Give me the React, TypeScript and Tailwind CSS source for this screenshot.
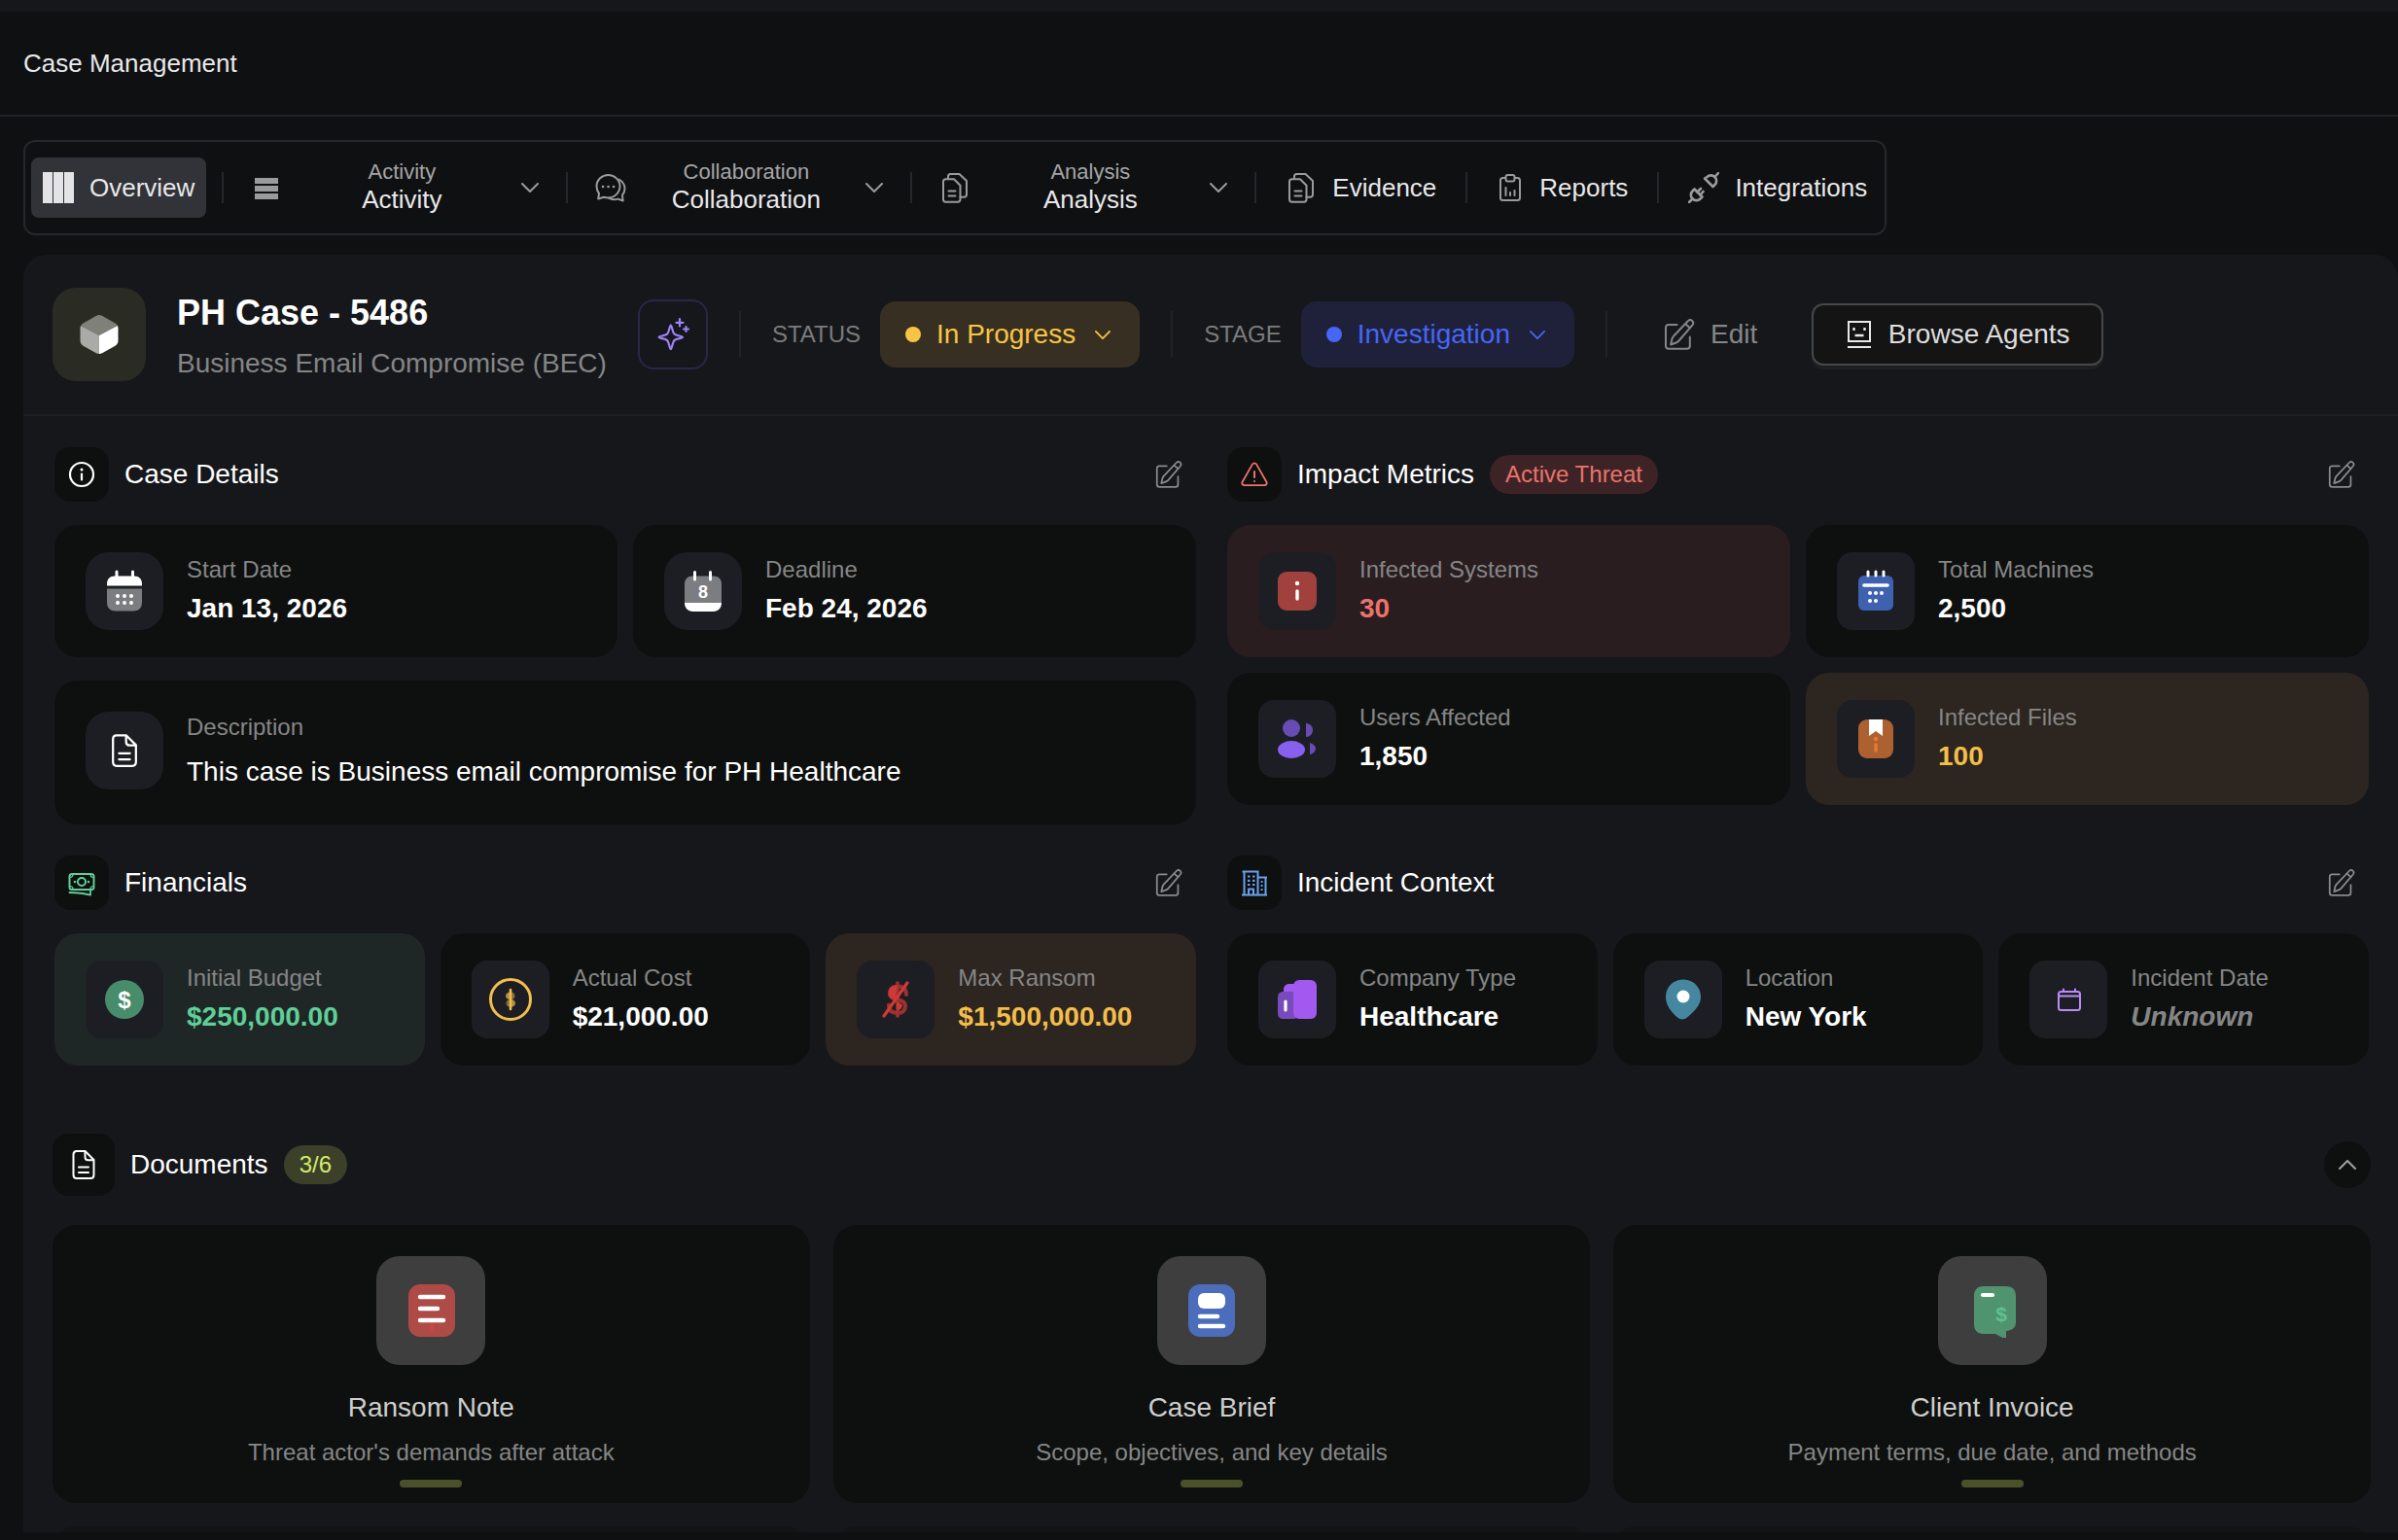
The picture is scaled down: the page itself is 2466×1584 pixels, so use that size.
import React from "react";

type IconProps = { className?: string };

const EditIcon = ({ className }: IconProps) => (
  <svg viewBox="0 0 32 32" fill="none" stroke="currentColor" strokeWidth="2" strokeLinecap="round" strokeLinejoin="round" className={className} aria-hidden="true">
    <path d="M13.500 6H5C3.200 6 2 7.200 2 9v18.800c0 1.800 1.200 3 3 3h18.800c1.800 0 3-1.200 3-3V18.500" />
    <path d="M24.800 2.300c1.200-1.400 3-1.500 4.300-.4s1.400 3 .3 4.400L15.500 22.500c-.9 1-1.600 1.500-2.900 2l-5.400 2 1.200-5.600c.3-1.300.7-2 1.600-3.100z" />
    <path d="M22.300 5.300l4.600 4" />
  </svg>
);

const ChevronDown = ({ className }: IconProps) => (
  <svg viewBox="0 0 18 10" fill="none" stroke="currentColor" strokeWidth="2" strokeLinecap="round" strokeLinejoin="round" className={className} aria-hidden="true">
    <path d="M1 1l8 8 8-8" />
  </svg>
);

const ChevronUp = ({ className }: IconProps) => (
  <svg viewBox="0 0 18 10" fill="none" stroke="currentColor" strokeWidth="2" strokeLinecap="round" strokeLinejoin="round" className={className} aria-hidden="true">
    <path d="M1 9l8-8 8 8" />
  </svg>
);

const ColumnsIcon = () => (
  <svg viewBox="0 0 32 32" fill="#e4e4e6" className="size-8" aria-hidden="true">
    <rect x="0" width="10" height="32" />
    <rect x="11" width="10" height="32" />
    <rect x="22" width="10" height="32" />
  </svg>
);

const RowsIcon = () => (
  <svg viewBox="0 0 32 32" fill="#9a9b9c" className="size-8" aria-hidden="true">
    <rect x="4" y="6" width="24" height="6" />
    <rect x="4" y="14" width="24" height="6" />
    <rect x="4" y="22" width="24" height="6" />
  </svg>
);

const ChatIcon = () => (
  <svg viewBox="0 0 32 32" fill="none" stroke="#9a9b9c" strokeWidth="2" strokeLinecap="round" strokeLinejoin="round" className="size-8" aria-hidden="true">
    <path d="M13.500 3C7 3 1.500 8 1.500 14.600c0 3 1 5.600 2.500 7.400l-.8 5.500 5.800-1.800c1.500.5 3 .7 4.500.7C20 26.400 25.500 21 25.500 14.600S20 3 13.500 3z" />
    <path d="M24.500 7.500c3.500 2 6 5.300 6 9.500 0 2.700-1 5-2.600 6.900l.8 5.600-5.200-1.900c-3.500 1-6.800.6-9.500-1" />
    <path d="M8 15h.1M13.500 15h.1M19 15h.1" strokeWidth="2.600" />
  </svg>
);

const DocsIcon = () => (
  <svg viewBox="0 0 32 32" fill="none" stroke="#9a9b9c" strokeWidth="2" strokeLinecap="round" strokeLinejoin="round" className="size-8" aria-hidden="true">
    <path d="M4 10c0-1.500 1-2.700 2.600-2.700h8.400l6.500 6.500V28c0 1.600-1 2.700-2.600 2.700H6.600C5 30.700 4 29.600 4 28z" />
    <path d="M9 7V4.500C9 3 10 2 11.500 2h9L28 9v14c0 1.700-1 2.700-2.600 2.700h-3.900" />
    <path d="M9.500 19.500h7M9.500 24.500h7" />
  </svg>
);

const ReportIcon = () => (
  <svg viewBox="0 0 28 32" fill="none" stroke="#9a9b9c" strokeWidth="2" strokeLinecap="round" strokeLinejoin="round" className="h-8 w-7" aria-hidden="true">
    <path d="M9 6H6.500C5 6 4 7 4 8.500v18C4 28 5 29 6.500 29h15c1.500 0 2.500-1 2.500-2.500v-18C24 7 23 6 21.500 6H19" />
    <rect x="9.500" y="3" width="9" height="6.500" rx="2" />
    <path d="M9.500 16v8M14 21v3M18.500 19v5" />
  </svg>
);

const PlugIcon = () => (
  <svg viewBox="0 0 32 32" fill="none" stroke="#9a9b9c" strokeWidth="2.600" strokeLinecap="round" strokeLinejoin="round" className="size-8" aria-hidden="true">
    <path d="M6.500 17.500l8 8-2 2c-2.200 2.200-5.800 2.200-8 0s-2.200-5.800 0-8z" />
    <path d="M1 31l3.500-3.500M9.500 20.500l3.500-3.500M12.500 23.500L15.500 20" />
    <path d="M17 6.500l8.500 8.500 2-2c2.200-2.200 2.200-5.800 0-8s-5.800-2.200-8 0z" />
    <path d="M27.500 5L31 1" />
  </svg>
);

const CubeIcon = () => (
  <svg viewBox="0 0 40 40" className="size-10" aria-hidden="true">
    <path d="M20 0c1 0 2 .3 3 .8l13 7.400c1.300.7 2.200 1.500 2.900 2.800L20 21 1.100 11c.7-1.300 1.600-2.100 2.900-2.800L17 .8c1-.5 2-.8 3-.8z" fill="#7f8179" />
    <path d="M1.100 11L20 21v19c-1 0-2-.3-3-.8L4 32c-2-1.100-3.500-3-3.500-5.500v-13c0-.9.200-1.700.6-2.500z" fill="#aaaba6" />
    <path d="M38.900 11L20 21v19c1 0 2-.3 3-.8L36 32c2-1.100 3.500-3 3.500-5.500v-13c0-.9-.2-1.700-.6-2.500z" fill="#fff" />
  </svg>
);

const SparkleIcon = () => (
  <svg viewBox="0 0 36 36" fill="none" stroke="#9d83f5" strokeWidth="2.200" strokeLinecap="round" strokeLinejoin="round" className="size-9" aria-hidden="true">
    <path d="M15.800 8.500c1.200 0 1.600 7 3.600 9s8.600 2 8.600 3.300-6.600 1.300-8.600 3.300-2.400 9-3.600 9-1.600-7-3.600-9-8.600-2-8.600-3.300 6.600-1.300 8.600-3.300 2.400-9 3.600-9z" />
    <path d="M25 2v7.500M21.500 5.800h7M31.500 10v5M29 12.500h5" />
  </svg>
);

const AgentIcon = () => (
  <svg viewBox="0 0 28 28" fill="none" stroke="#e8e8e8" strokeWidth="2" className="size-7" aria-hidden="true">
    <rect x="3" y="1" width="22" height="20" />
    <path d="M2 27h24" />
    <path d="M8.500 7v3M19.500 7v3M9.500 15h9" strokeWidth="2.400" />
  </svg>
);

const InfoIcon = () => (
  <svg viewBox="0 0 28 28" fill="none" stroke="#fff" strokeWidth="2.200" strokeLinecap="round" className="size-7" aria-hidden="true">
    <circle cx="14" cy="14" r="12" />
    <path d="M14 13.500v6" />
    <path d="M14 9h.01" strokeWidth="3" />
  </svg>
);

const WarningIcon = () => (
  <svg viewBox="0 0 28 28" fill="none" stroke="#e9746b" strokeWidth="1.800" strokeLinecap="round" strokeLinejoin="round" className="size-7" aria-hidden="true">
    <path d="M12 3.400c.9-1.500 3.100-1.500 4 0l10.400 18.300c.9 1.600-.2 3.500-2 3.500H3.600c-1.800 0-2.900-1.900-2-3.500z" />
    <path d="M14 11v6M14 21h.01" strokeWidth="2" />
  </svg>
);

const CashIcon = () => (
  <svg viewBox="0 0 28 28" fill="none" stroke="#5fcf99" strokeWidth="2" strokeLinecap="round" strokeLinejoin="round" className="size-7" aria-hidden="true">
    <rect x="1.500" y="5" width="25" height="16" rx="2.500" />
    <circle cx="14" cy="13" r="4" />
    <path d="M7 13h.01M21 13h.01" strokeWidth="2.600" />
    <path d="M2 8.500c2 0 3-1.500 3-3M26 8.500c-2 0-3-1.500-3-3M2 17.500c2 0 3 1.500 3 3M26 17.500c-2 0-3 1.500-3 3" strokeWidth="1.200" />
    <path d="M1.500 24c8 0 15 .8 21.500 2.600V22" strokeWidth="1.800" />
  </svg>
);

const BuildingIcon = () => (
  <svg viewBox="0 0 28 28" fill="none" stroke="#69a1ee" strokeWidth="2" strokeLinejoin="round" className="size-7" aria-hidden="true">
    <path d="M3.500 26.500V2.500h14v24M17.500 8.500h8v18M1 26.500h26M1.500 2.500h17M17.500 8.500h9.500" />
    <path d="M8 26v-5.500h5V26" />
    <path d="M7 7.500h2.400M12 7.500h2.400M7 11.800h2.400M12 11.800h2.400M7 16h2.400M12 16h2.400M20.700 13h1.800M20.700 17h1.800M20.700 21h1.800" strokeWidth="2.200" />
  </svg>
);

const FileIcon = ({ className }: IconProps) => (
  <svg viewBox="0 0 32 32" fill="none" stroke="#fff" strokeWidth="2" strokeLinecap="round" strokeLinejoin="round" className={className} aria-hidden="true">
    <path d="M5.500 5.500c0-2 1.300-3.500 3.300-3.500h8.700l9 9v15.500c0 2-1.300 3.500-3.300 3.500H8.800c-2 0-3.300-1.500-3.300-3.500z" />
    <path d="M17.500 2.500V8c0 2 1 3.200 3 3.200H26" />
    <path d="M11 18.500h10M11 24h10" />
  </svg>
);

const CalendarDots = () => (
  <svg viewBox="0 0 48 48" className="size-12" aria-hidden="true">
    <path d="M6 18.500v-2c0-5 3-8 8-8h20c5 0 8 3 8 8v2z" fill="#fff" />
    <path d="M6 21.500h36v14c0 6-3.500 9-9 9H15c-5.500 0-9-3-9-9z" fill="#7c7d80" />
    <path d="M16 4v6M32.500 4v6" stroke="#fff" strokeWidth="3" strokeLinecap="round" />
    <g fill="#fff">
      <circle cx="17" cy="29" r="2" /><circle cx="24" cy="29" r="2" /><circle cx="31" cy="29" r="2" />
      <circle cx="17" cy="36" r="2" /><circle cx="24" cy="36" r="2" /><circle cx="31" cy="36" r="2" />
    </g>
  </svg>
);

const CalendarEight = () => (
  <svg viewBox="0 0 48 48" className="size-12" aria-hidden="true">
    <path d="M5 36V17c0-5.500 3-8.500 8.500-8.500h21c5.500 0 8.500 3 8.500 8.500v19z" fill="#7c7d80" />
    <path d="M5 36h38c0 5.500-3.500 9-8.500 9h-21C8.500 45 5 41.500 5 36z" fill="#fff" />
    <path d="M15.500 4.500v7.500M31.500 4.500v7.500" stroke="#fff" strokeWidth="3" strokeLinecap="round" />
    <text x="24" y="31" textAnchor="middle" fontSize="18" fontWeight="700" fill="#fff">8</text>
  </svg>
);

const InfectedIcon = () => (
  <svg viewBox="0 0 48 48" className="size-12" aria-hidden="true">
    <rect x="4" y="4" width="40" height="40" rx="9" fill="#a0413d" />
    <circle cx="24" cy="16" r="2.200" fill="#fff" />
    <path d="M24 24v8" stroke="#fff" strokeWidth="3.400" strokeLinecap="round" />
  </svg>
);

const MachinesIcon = () => (
  <svg viewBox="0 0 48 48" className="size-12" aria-hidden="true">
    <rect x="6" y="8" width="36" height="36" rx="6" fill="#3e61b0" />
    <path d="M16 4v4M24 4v4M32 4v4" stroke="#fff" strokeWidth="3" strokeLinecap="round" />
    <path d="M12 18h24" stroke="#fff" strokeWidth="3.600" strokeLinecap="round" />
    <g fill="#fff">
      <circle cx="18" cy="26" r="2" /><circle cx="24" cy="26" r="2" /><circle cx="30" cy="26" r="2" />
      <circle cx="18" cy="34" r="2" /><circle cx="24" cy="34" r="2" />
    </g>
  </svg>
);

const UsersIcon = () => (
  <svg viewBox="0 0 48 48" className="size-12" aria-hidden="true">
    <circle cx="18" cy="13" r="9" fill="#694bb4" />
    <path d="M33 8c4 0 7 3 7 7s-3 7-7 7z" fill="#694bb4" />
    <path d="M37 28c3.500 1 6 3.500 6 6s-2.500 5.500-6 6z" fill="#694bb4" />
    <ellipse cx="18" cy="35" rx="14" ry="9" fill="#8760f0" />
  </svg>
);

const InfectedFilesIcon = () => (
  <svg viewBox="0 0 48 48" className="size-12" aria-hidden="true">
    <rect x="6" y="4" width="36" height="40" rx="9" fill="#ad6131" />
    <path d="M17 4h14v17l-7-5-7 5z" fill="#fff" />
    <circle cx="24" cy="24" r="2.200" fill="#e57a33" />
    <path d="M24 30v6" stroke="#e57a33" strokeWidth="3.400" strokeLinecap="round" />
  </svg>
);

const BudgetIcon = () => (
  <svg viewBox="0 0 48 48" className="size-12" aria-hidden="true">
    <circle cx="24" cy="24" r="20" fill="#478c6b" />
    <text x="24" y="33" textAnchor="middle" fontSize="24" fontWeight="700" fill="#fff">$</text>
  </svg>
);

const CostIcon = () => (
  <svg viewBox="0 0 48 48" className="size-12" aria-hidden="true">
    <circle cx="24" cy="24" r="20.500" fill="none" stroke="#f2be4b" strokeWidth="3" />
    <path d="M24 16.500c-3 0-5 1.500-5 4s2 3.500 5 3.500zM24 24c3 0 5 1.300 5 3.800s-2 4-5 4z" fill="#f2be4b" opacity=".7" />
    <path d="M24 16.500c3 0 4.500 1.500 4.500 4S27 24 24 24zM24 24c-3 0-4.500 1.300-4.500 3.800s1.500 4 4.500 4z" fill="#f2be4b" opacity=".5" />
    <path d="M24 14v20" stroke="#f2be4b" strokeWidth="2.600" strokeLinecap="round" />
  </svg>
);

const RansomIcon = () => (
  <svg viewBox="0 0 48 48" className="size-12" fill="none" strokeLinecap="round" aria-hidden="true">
    <path d="M26 7v34" stroke="#9a3230" strokeWidth="3.600" />
    <path d="M35 19c0-5.500-3-8.500-9-8.500-5 0-8 2.500-8 7 0 9.500 16 4 16 13.500 0 4.500-3 7-8 7-6 0-9-3-9-8.500" stroke="#9a3230" strokeWidth="4" />
    <path d="M26 9.500c-6 0-9.500 3-9.500 8 0 4 2.500 6 7 7z" fill="#cf3a36" />
    <path d="M25 26l6 3.500c0 3-1.500 5-5.500 6z" fill="#cf3a36" />
    <path d="M36 7L12 41" stroke="#cf3a36" strokeWidth="3.200" />
  </svg>
);

const CompanyIcon = () => (
  <svg viewBox="0 0 48 48" className="size-12" aria-hidden="true">
    <path d="M10 16v-2c0-3.500 2-6 6-6h6v10z" fill="#a159f0" />
    <path d="M4 22c0-4 2-6 6-6h12v28H10c-4 0-6-2-6-6z" fill="#794abb" />
    <rect x="20" y="4" width="24" height="40" rx="6" fill="#a159f0" />
    <path d="M12 26v9" stroke="#fff" strokeWidth="3.200" strokeLinecap="round" />
  </svg>
);

const LocationIcon = () => (
  <svg viewBox="0 0 48 48" className="size-12" aria-hidden="true">
    <path d="M24 3.500C14 3.500 6 11 6 21.500c0 8 5 15 12 21 3 2.500 7 2.500 10 0 8-6.500 14-13 14-21C42 11 34 3.500 24 3.500z" fill="#44879f" />
    <circle cx="24" cy="21" r="6.500" fill="#fff" />
  </svg>
);

const IncidentDateIcon = () => (
  <svg viewBox="0 0 48 48" className="size-12" fill="none" stroke="#b98bf5" strokeWidth="2" strokeLinecap="round" aria-hidden="true">
    <rect x="14" y="16" width="22" height="19" rx="2.500" />
    <path d="M14 20.500h22M19 13.500V16M31 13.500V16" />
  </svg>
);

const RansomNoteIcon = () => (
  <svg viewBox="0 0 56 56" className="size-14" aria-hidden="true">
    <rect x="5" y="1" width="48" height="54" rx="12" fill="#ae4b47" />
    <path d="M29 38v11" stroke="#cf4540" strokeWidth="3" />
    <path d="M17 14h24M17 26h18M17 38h24" stroke="#fff" strokeWidth="4.400" strokeLinecap="round" />
  </svg>
);

const BriefIcon = () => (
  <svg viewBox="0 0 56 56" className="size-14" aria-hidden="true">
    <rect x="4" y="1" width="48" height="54" rx="12" fill="#4b6dbb" />
    <rect x="14" y="10" width="28" height="16" rx="6" fill="#fff" />
    <path d="M16 34h18M16 44h24" stroke="#fff" strokeWidth="4.400" strokeLinecap="round" />
  </svg>
);

const InvoiceIcon = () => (
  <svg viewBox="0 0 56 56" className="size-14" aria-hidden="true">
    <path d="M9 13C9 6.500 12.500 3 19 3h23c6.500 0 10 3.500 10 10v27c0 5-3 8.500-10 9v9L31 52H19C12.500 52 9 48.500 9 42z" fill="#4f946f" />
    <path d="M18 12h10" stroke="#fff" strokeWidth="4.200" strokeLinecap="round" />
    <text x="37" y="39" textAnchor="middle" fontSize="21" fontWeight="700" fill="#63bf91">$</text>
  </svg>
);

const Divider = ({ tall }: { tall?: boolean }) => (
  <div className={tall ? "h-12 w-0.5 shrink-0 bg-[#212226]" : "h-8 w-0.5 shrink-0 bg-[#26272a]"} />
);

const NavMenu = ({ label, icon }: { label: string; icon: React.ReactNode }) => (
  <button type="button" aria-haspopup="menu" className="flex h-full w-[352px] items-center px-7">
    {icon}
    <span className="flex flex-1 flex-col items-center pb-1">
      <span className="text-[22px] leading-7 text-[#a5a5a6]">{label}</span>
      <span className="text-[26px] leading-7 text-[#e8e8ea]">{label}</span>
    </span>
    <ChevronDown className="h-2.5 w-[18px] text-[#9a9b9c]" />
  </button>
);

const NavLink = ({ label, icon }: { label: string; icon: React.ReactNode }) => (
  <a href="#" className="flex h-full items-center gap-4 px-[30px] text-[26px] text-[#e8e8ea]">
    {icon}
    {label}
  </a>
);

type SectionProps = {
  title: string;
  icon: React.ReactNode;
  badge?: string;
  children: React.ReactNode;
};

const Section = ({ title, icon, badge, children }: SectionProps) => (
  <section>
    <div className="mb-6 flex h-14 items-center gap-4">
      <div className="flex size-14 items-center justify-center rounded-2xl bg-[#0e100f]">{icon}</div>
      <h2 className="text-[28px] leading-10 text-white">{title}</h2>
      {badge && <span className="rounded-full bg-[#3e2326] px-4 text-2xl leading-10 text-[#e9746b]">{badge}</span>}
      <button type="button" aria-label={`Edit ${title}`} className="mr-3.5 ml-auto text-[#8a8b8b]">
        <EditIcon className="size-7" />
      </button>
    </div>
    {children}
  </section>
);

type StatProps = {
  label: string;
  value: string;
  icon: React.ReactNode;
  card?: string;
  tile?: string;
  text?: string;
};

const Stat = ({ label, value, icon, card = "bg-[#0e100f]", tile = "rounded-2xl", text = "text-white" }: StatProps) => (
  <div className={`flex items-center gap-6 rounded-3xl px-8 py-7 ${card}`}>
    <div className={`flex size-20 shrink-0 items-center justify-center bg-[#1d1e24] ${tile}`}>{icon}</div>
    <div className="whitespace-nowrap">
      <div className="text-2xl leading-9 text-[#858686]">{label}</div>
      <div className={`text-[28px] leading-[44px] font-bold ${text}`}>{value}</div>
    </div>
  </div>
);

const documents = [
  { title: "Ransom Note", text: "Threat actor's demands after attack", icon: <RansomNoteIcon /> },
  { title: "Case Brief", text: "Scope, objectives, and key details", icon: <BriefIcon /> },
  { title: "Client Invoice", text: "Payment terms, due date, and methods", icon: <InvoiceIcon /> },
];

export default function App() {
  return (
    <div className="flex h-screen flex-col overflow-hidden bg-[#0f1012] pb-2 font-['Liberation_Sans',Arial,sans-serif]">
      <div className="h-3 shrink-0 bg-[#16171b]" />
      <header className="flex h-[108px] shrink-0 items-center border-b-2 border-[#212225] px-6">
        <h1 className="text-[26px] leading-8 text-[#e8e8ea]">Case Management</h1>
      </header>

      <nav className="mt-6 ml-6 flex h-[98px] shrink-0 items-center self-start rounded-xl border-2 border-[#26272a] pl-1.5" aria-label="Case">
        <a href="#" aria-current="page" className="mr-4 flex h-[62px] items-center gap-4 rounded-lg bg-[#323338] px-3 text-[26px] text-[#e8e8ea]">
          <ColumnsIcon />
          Overview
        </a>
        <Divider />
        <NavMenu label="Activity" icon={<RowsIcon />} />
        <Divider />
        <NavMenu label="Collaboration" icon={<ChatIcon />} />
        <Divider />
        <NavMenu label="Analysis" icon={<DocsIcon />} />
        <Divider />
        <NavLink label="Evidence" icon={<DocsIcon />} />
        <Divider />
        <NavLink label="Reports" icon={<ReportIcon />} />
        <Divider />
        <a href="#" className="flex h-full items-center gap-4 pr-[18px] pl-[30px] text-[26px] text-[#e8e8ea]">
          <PlugIcon />
          Integrations
        </a>
      </nav>

      <main className="mt-5 ml-6 min-h-0 flex-1 overflow-hidden rounded-t-3xl bg-[#16171b]">
        <div className="flex h-[166px] items-center border-b-2 border-[#1e1f23] pr-7 pl-[30px]">
          <div className="flex size-24 items-center justify-center rounded-3xl bg-[#2a2c24]">
            <CubeIcon />
          </div>
          <div className="ml-8 pt-2 whitespace-nowrap">
            <div className="text-4xl leading-[52px] font-bold text-white">PH Case - 5486</div>
            <div className="text-[28px] leading-[52px] text-[#858686]">Business Email Compromise (BEC)</div>
          </div>
          <button type="button" aria-label="AI assist" className="ml-8 flex size-[72px] items-center justify-center rounded-2xl border-2 border-[#2c2549]">
            <SparkleIcon />
          </button>
          <div className="mr-8 ml-8">
            <Divider tall />
          </div>
          <span className="text-2xl text-[#7b7c7c]">STATUS</span>
          <button type="button" aria-haspopup="listbox" className="ml-5 flex h-[68px] items-center rounded-2xl bg-[#373022] pr-[30px] pl-[26px] text-[28px] text-[#f8c445]">
            <span className="mr-4 size-4 rounded-full bg-[#f8c445]" />
            In Progress
            <ChevronDown className="ml-5 h-[9px] w-4" />
          </button>
          <div className="mr-8 ml-8">
            <Divider tall />
          </div>
          <span className="text-2xl text-[#7b7c7c]">STAGE</span>
          <button type="button" aria-haspopup="listbox" className="ml-5 flex h-[68px] items-center rounded-2xl bg-[#1f213a] pr-[30px] pl-[26px] text-[28px] text-[#4666f6]">
            <span className="mr-4 size-4 rounded-full bg-[#4666f6]" />
            Investigation
            <ChevronDown className="ml-5 h-[9px] w-4" />
          </button>
          <div className="mr-[58px] ml-8">
            <Divider tall />
          </div>
          <button type="button" className="flex items-center gap-4 text-[28px] text-[#858686]">
            <EditIcon className="size-8" />
            Edit
          </button>
          <button type="button" className="ml-14 flex h-16 w-[300px] items-center justify-center gap-4 rounded-xl border-2 border-[#464747] bg-[#141414] text-[28px] text-[#dedede] shadow-[0_4px_0_#1e1f23]">
            <AgentIcon />
            Browse Agents
          </button>
        </div>

        <div className="pt-8 pr-7 pl-[30px]">
          <div className="grid grid-cols-2 gap-8 px-0.5">
            <Section title="Case Details" icon={<InfoIcon />}>
              <div className="grid grid-cols-2 gap-4">
                <Stat label="Start Date" value="Jan 13, 2026" icon={<CalendarDots />} tile="rounded-3xl" />
                <Stat label="Deadline" value="Feb 24, 2026" icon={<CalendarEight />} tile="rounded-3xl" />
              </div>
              <div className="mt-6 flex items-start gap-6 rounded-3xl bg-[#0e100f] p-8">
                <div className="flex size-20 shrink-0 items-center justify-center rounded-3xl bg-[#1d1e24]">
                  <FileIcon className="size-9" />
                </div>
                <div>
                  <div className="text-2xl leading-8 text-[#858686]">Description</div>
                  <p className="mt-2 text-[28px] leading-[44px] text-white">This case is Business email compromise for PH Healthcare</p>
                </div>
              </div>
            </Section>

            <Section title="Impact Metrics" icon={<WarningIcon />} badge="Active Threat">
              <div className="grid grid-cols-2 gap-4">
                <Stat label="Infected Systems" value="30" icon={<InfectedIcon />} card="bg-[#2a1d20]" text="text-[#e9746b]" />
                <Stat label="Total Machines" value="2,500" icon={<MachinesIcon />} />
                <Stat label="Users Affected" value="1,850" icon={<UsersIcon />} />
                <Stat label="Infected Files" value="100" icon={<InfectedFilesIcon />} card="bg-[#2d251f]" text="text-[#f2be4b]" />
              </div>
            </Section>

            <Section title="Financials" icon={<CashIcon />}>
              <div className="grid grid-cols-3 gap-4">
                <Stat label="Initial Budget" value="$250,000.00" icon={<BudgetIcon />} card="bg-[#1f2726]" text="text-[#5fcf99]" />
                <Stat label="Actual Cost" value="$21,000.00" icon={<CostIcon />} />
                <Stat label="Max Ransom" value="$1,500,000.00" icon={<RansomIcon />} card="bg-[#2d251f]" text="text-[#f2be4b]" />
              </div>
            </Section>

            <Section title="Incident Context" icon={<BuildingIcon />}>
              <div className="grid grid-cols-3 gap-4">
                <Stat label="Company Type" value="Healthcare" icon={<CompanyIcon />} />
                <Stat label="Location" value="New York" icon={<LocationIcon />} />
                <Stat label="Incident Date" value="Unknown" icon={<IncidentDateIcon />} text="italic text-[#858686]" />
              </div>
            </Section>
          </div>

          <section className="mt-[70px]">
            <div className="mb-[30px] flex items-center gap-4">
              <div className="flex size-16 items-center justify-center rounded-2xl bg-[#0e100f]">
                <FileIcon className="size-8" />
              </div>
              <h2 className="text-[28px] leading-10 text-white">Documents</h2>
              <span className="rounded-full bg-[#3c4028] px-4 text-2xl leading-10 text-[#d3ea69]">3/6</span>
              <button type="button" aria-label="Collapse documents" className="ml-auto flex size-12 items-center justify-center rounded-full bg-[#0e100f] text-[#a0a0a0]">
                <ChevronUp className="h-2.5 w-[18px]" />
              </button>
            </div>
            <div className="grid grid-cols-3 gap-6">
              {documents.map((doc) => (
                <a key={doc.title} href="#" className="flex flex-col items-center rounded-3xl bg-[#0e100f] pt-8 pb-4">
                  <span className="flex size-28 items-center justify-center rounded-3xl bg-[#3d3e3d]">{doc.icon}</span>
                  <span className="mt-6 text-[28px] leading-10 text-[#cdcecd]">{doc.title}</span>
                  <span className="mt-2 text-2xl leading-9 text-[#858686]">{doc.text}</span>
                  <span className="mt-2.5 h-2 w-16 rounded-full bg-[#4a5029]" />
                </a>
              ))}
              <div className="h-72 rounded-3xl bg-[#131416]" />
              <div className="h-72 rounded-3xl bg-[#131416]" />
              <div className="h-72 rounded-3xl bg-[#131416]" />
            </div>
          </section>
        </div>
      </main>
    </div>
  );
}
